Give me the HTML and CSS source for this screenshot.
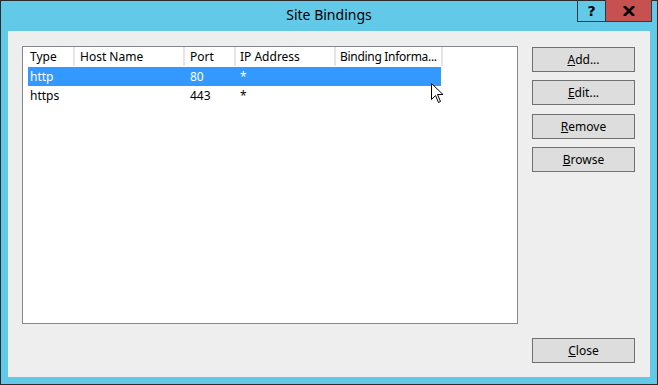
FILE: index.html
```html
<html>
<head>
<title>Site Bindings</title>
<link rel="stylesheet" href="styles.css">
</head>
<body>

<div class="window">
    <div class="titlebar">
        <span class="title">Site Bindings</span>
        <div class="caption-buttons">
            <span class="cap help">?</span>
            <span class="cap close">
                <svg width="12" height="10" viewBox="0 0 12 10"><path d="M1 0 L11 10 M11 0 L1 10" stroke="#000" stroke-width="2.6"/></svg>
            </span>
        </div>
    </div>

    <div class="content">
        <div class="list">
            <div class="row header">
                <div class="col c-type">Type</div>
                <div class="col c-host">Host Name</div>
                <div class="col c-port">Port</div>
                <div class="col c-ip">IP Address</div>
                <div class="col c-info">Binding Informa...</div>
            </div>
            <div class="row selected">
                <div class="col c-type">http</div>
                <div class="col c-host"></div>
                <div class="col c-port">80</div>
                <div class="col c-ip">*</div>
                <div class="col c-info"></div>
            </div>
            <div class="row">
                <div class="col c-type">https</div>
                <div class="col c-host"></div>
                <div class="col c-port">443</div>
                <div class="col c-ip">*</div>
                <div class="col c-info"></div>
            </div>
        </div>

        <div class="side">
            <button class="btn btn-add"><u>A</u>dd...</button>
            <button class="btn btn-edit"><u>E</u>dit...</button>
            <button class="btn btn-remove"><u>R</u>emove</button>
            <button class="btn btn-browse"><u>B</u>rowse</button>
            <button class="btn btn-close"><u>C</u>lose</button>
        </div>
    </div>

    <svg class="cursor" width="14" height="22" viewBox="0 0 14 22">
        <path d="M0.5 0.5 L0.5 16.5 L4.5 12.5 L7.5 19.5 L9.5 18.5 L6.5 11.5 L12 11.5 Z" fill="#fff" stroke="#000" stroke-width="1"/>
    </svg>
</div>

</body>
</html>
```

FILE: styles.css
```css
body {
    margin: 0;
    font-family: "Noto Sans", "Open Sans", sans-serif;
    font-size: 12px;
    color: #000;
}

.window {
    position: relative;
    width: 656px;
    height: 383px;
    border: 1px solid #2b2b2b;
    background-color: #63c9e9;
    display: flex;
    flex-direction: column;
}

.titlebar {
    position: relative;
    height: 29px;
    display: flex;
    justify-content: center;
    align-items: center;
}

.title {
    font-size: 14px;
    color: #000;
    margin-top: -2px;
}

.caption-buttons {
    position: absolute;
    top: -1px;
    right: 5px;
    display: flex;
    border: 1px solid #2b3a44;
    border-top: none;
}

.cap {
    height: 21px;
    display: flex;
    justify-content: center;
    align-items: center;
    font-weight: bold;
    font-size: 14px;
    font-family: "DejaVu Sans", sans-serif;
}

.help {
    width: 27px;
    border-right: 1px solid #2b3a44;
}

.close {
    width: 45px;
    background-color: #c75050;
}

.content {
    margin: 1px 7px 7px 7px;
    flex: 1;
    background-color: #eeeeee;
    padding: 15px 14px 14px 14px;
    display: flex;
}

.list {
    width: 494px;
    height: 276px;
    border: 1px solid #828790;
    background-color: #fff;
}

.row {
    display: flex;
    height: 19px;
    line-height: 19px;
    margin-left: 5px;
    width: 413px;
}

.row.header {
    margin-left: 0;
    width: 420px;
    height: 19px;
    line-height: 18px;
    border-bottom: 1px solid #fff;
}

.header .col {
    border-right: 2px solid #e5e5e5;
    padding-top: 1px;
}

.selected {
    background-color: #3399ff;
    color: #fff;
}

.col {
    padding-left: 2px;
    white-space: nowrap;
    overflow: hidden;
    box-sizing: border-box;
}

.c-type { width: 47px; }
.c-host { width: 110px; padding-left: 5px; }
.c-port { width: 51px; padding-left: 5px; }
.c-ip { width: 100px; padding-left: 4px; }
.c-info { width: 105px; padding-left: 4px; }

.header .c-type { width: 52px; padding-left: 7px; }
.header .c-info { width: 107px; letter-spacing: -0.3px; }

.side {
    margin-left: 14px;
    width: 103px;
    display: flex;
    flex-direction: column;
}

.btn {
    width: 103px;
    height: 25px;
    border: 1px solid #707070;
    background-color: #dddddd;
    font-family: "Noto Sans", "Open Sans", sans-serif;
    font-size: 12px;
    color: #000;
    padding: 0;
}

.btn-add { margin-top: 1px; }
.btn-edit { margin-top: 8px; }
.btn-remove { margin-top: 9px; }
.btn-browse { margin-top: 8px; }
.btn-close { margin-top: auto; }

.cursor {
    position: absolute;
    left: 430px;
    top: 82px;
}
```
